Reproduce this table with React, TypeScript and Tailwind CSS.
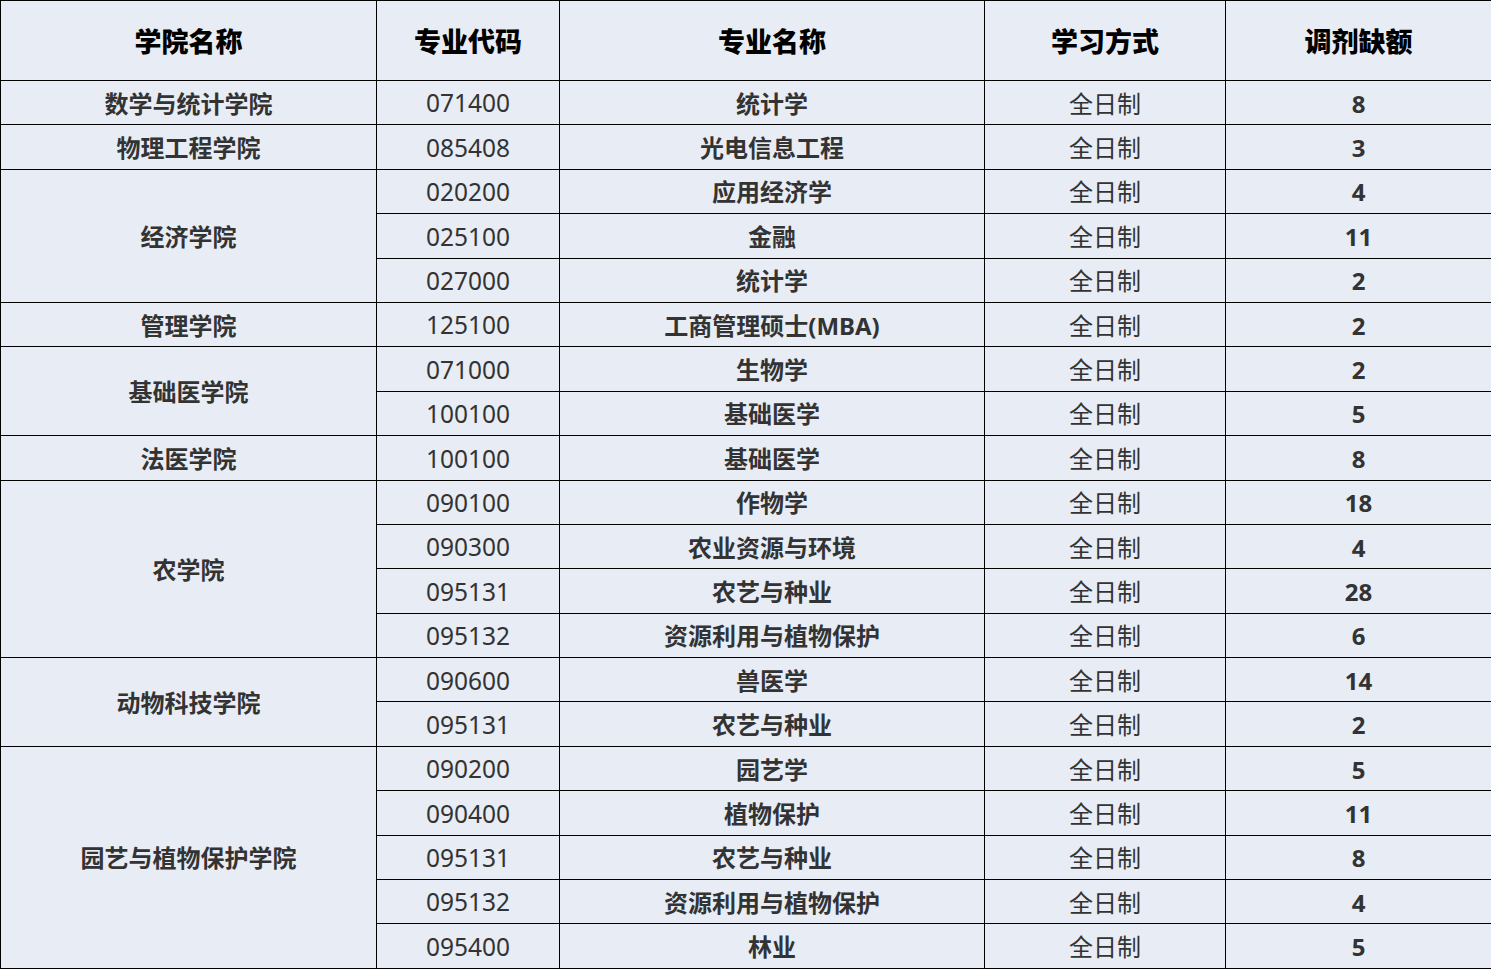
type Row = { college?: string; span?: number; code: string; major: string; mode: string; quota: string };

const rows: Row[] = [
  { college: "数学与统计学院", span: 1, code: "071400", major: "统计学", mode: "全日制", quota: "8" },
  { college: "物理工程学院", span: 1, code: "085408", major: "光电信息工程", mode: "全日制", quota: "3" },
  { college: "经济学院", span: 3, code: "020200", major: "应用经济学", mode: "全日制", quota: "4" },
  { code: "025100", major: "金融", mode: "全日制", quota: "11" },
  { code: "027000", major: "统计学", mode: "全日制", quota: "2" },
  { college: "管理学院", span: 1, code: "125100", major: "工商管理硕士(MBA)", mode: "全日制", quota: "2" },
  { college: "基础医学院", span: 2, code: "071000", major: "生物学", mode: "全日制", quota: "2" },
  { code: "100100", major: "基础医学", mode: "全日制", quota: "5" },
  { college: "法医学院", span: 1, code: "100100", major: "基础医学", mode: "全日制", quota: "8" },
  { college: "农学院", span: 4, code: "090100", major: "作物学", mode: "全日制", quota: "18" },
  { code: "090300", major: "农业资源与环境", mode: "全日制", quota: "4" },
  { code: "095131", major: "农艺与种业", mode: "全日制", quota: "28" },
  { code: "095132", major: "资源利用与植物保护", mode: "全日制", quota: "6" },
  { college: "动物科技学院", span: 2, code: "090600", major: "兽医学", mode: "全日制", quota: "14" },
  { code: "095131", major: "农艺与种业", mode: "全日制", quota: "2" },
  { college: "园艺与植物保护学院", span: 5, code: "090200", major: "园艺学", mode: "全日制", quota: "5" },
  { code: "090400", major: "植物保护", mode: "全日制", quota: "11" },
  { code: "095131", major: "农艺与种业", mode: "全日制", quota: "8" },
  { code: "095132", major: "资源利用与植物保护", mode: "全日制", quota: "4" },
  { code: "095400", major: "林业", mode: "全日制", quota: "5" },
];

const font = { fontFamily: '"Noto Sans", "Noto Sans CJK SC", sans-serif' };

export default function App() {
  return (
    <div className="w-[1491px] h-[970px] bg-white" style={font}>
      <table className="w-[1491px] table-fixed border-collapse bg-[#e8ecf4] text-[#333333]">
        <colgroup>
          <col className="w-[376px]" />
          <col className="w-[183px]" />
          <col className="w-[425px]" />
          <col className="w-[241px]" />
          <col className="w-[266px]" />
        </colgroup>
        <thead>
          <tr className="h-[80px]">
            {["学院名称", "专业代码", "专业名称", "学习方式", "调剂缺额"].map((h) => (
              <th key={h} className="border border-black p-0 pt-[2px] text-center align-middle text-[27px] font-black leading-none text-black">
                {h}
              </th>
            ))}
          </tr>
        </thead>
        <tbody>
          {rows.map((r, i) => (
            <tr key={i} className="h-[44.4px]">
              {r.college && (
                <td rowSpan={r.span} className="border border-black p-0 pt-[2px] text-center align-middle text-[24px] font-bold leading-none">
                  {r.college}
                </td>
              )}
              <td className="border border-black p-0 pt-[2px] text-center align-middle text-[24.5px] leading-none">{r.code}</td>
              <td className="border border-black p-0 pt-[2px] text-center align-middle text-[24px] font-bold leading-none">{r.major}</td>
              <td className="border border-black p-0 pt-[2px] text-center align-middle text-[24px] leading-none">{r.mode}</td>
              <td className="border border-black p-0 pt-[2px] text-center align-middle text-[24px] font-bold leading-none">{r.quota}</td>
            </tr>
          ))}
        </tbody>
      </table>
    </div>
  );
}
